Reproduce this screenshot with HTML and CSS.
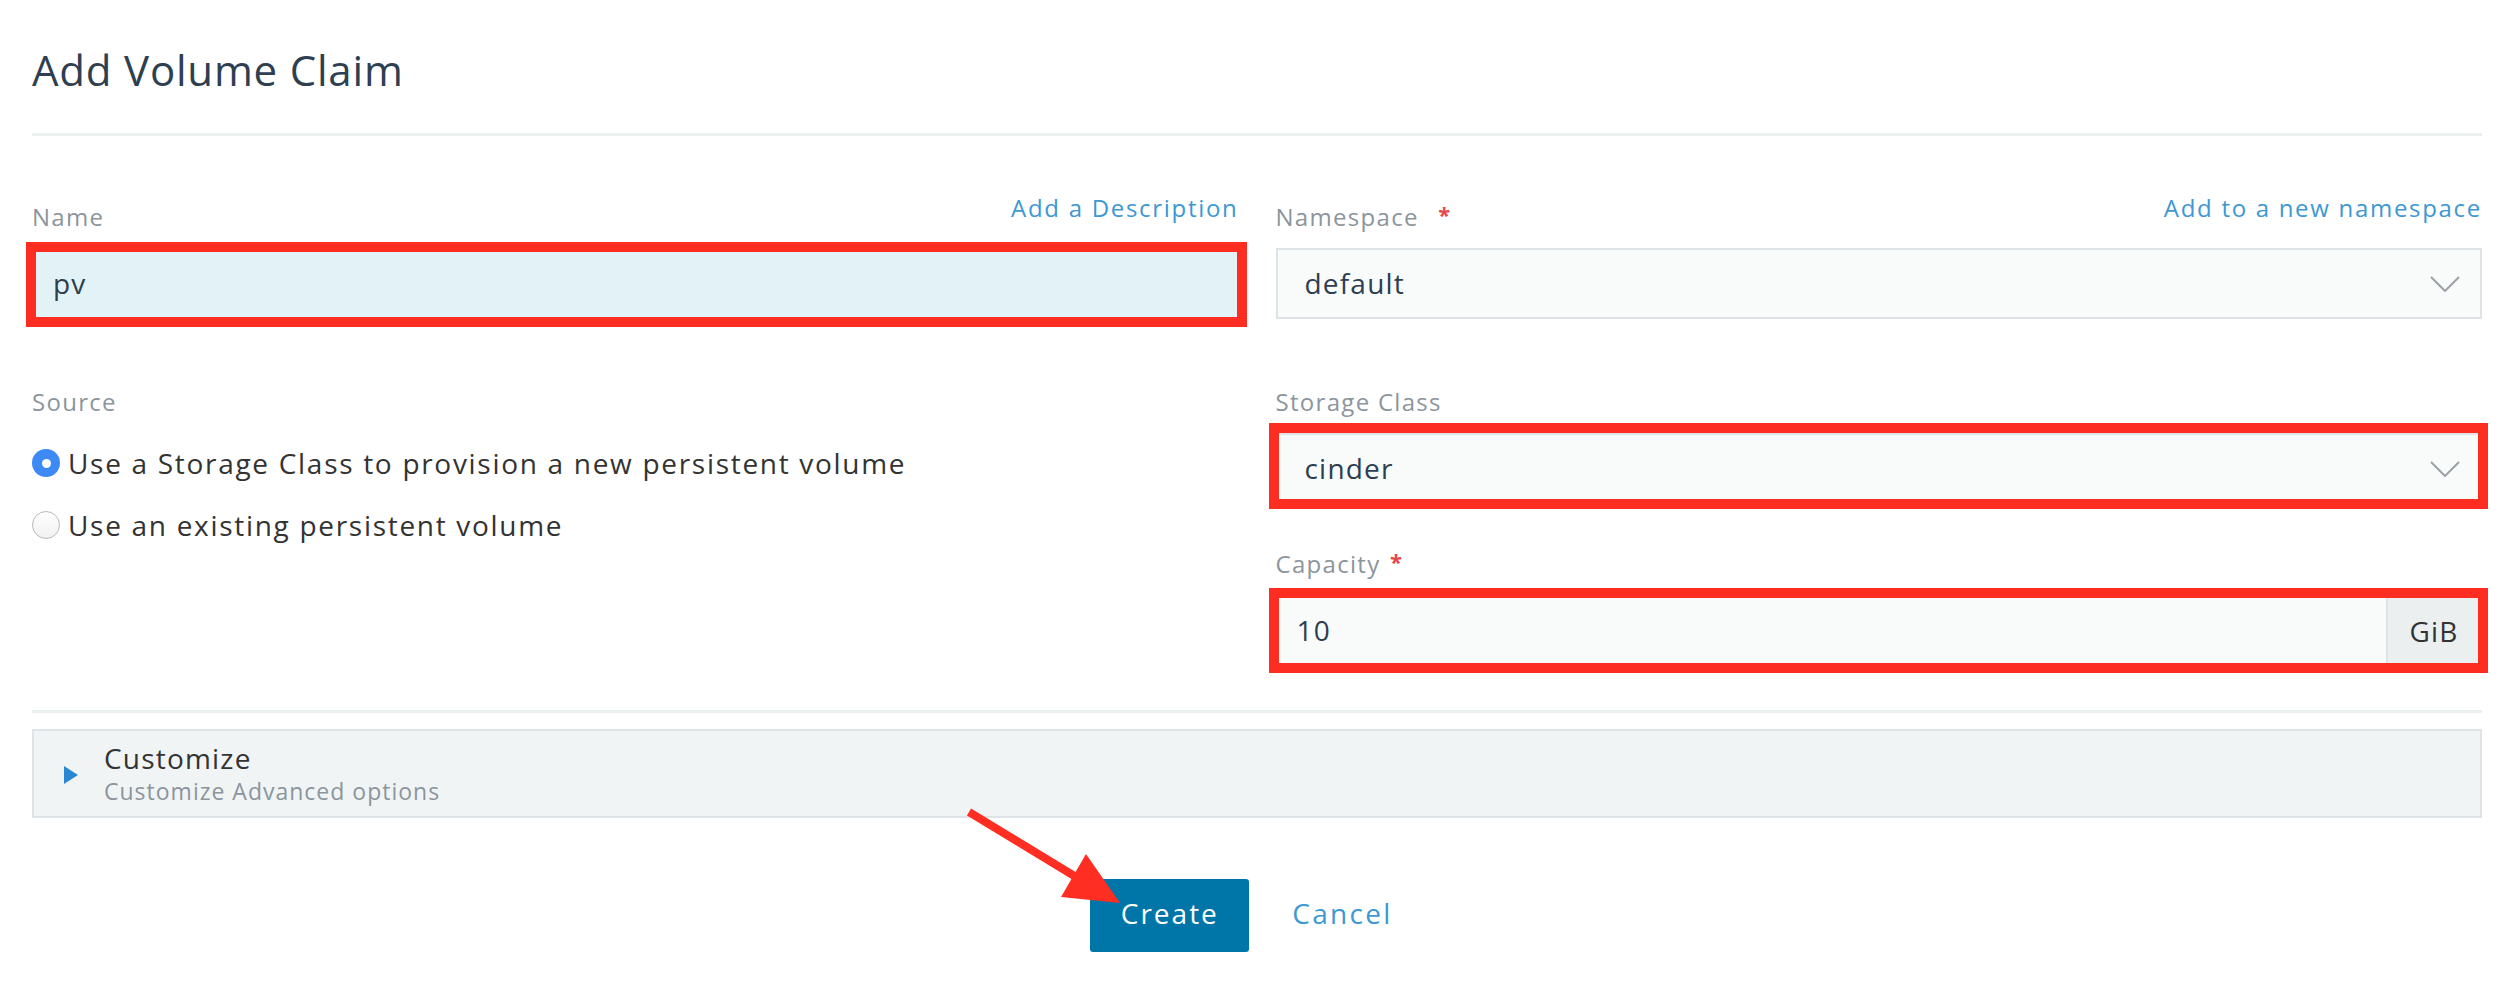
FILE: index.html
```html
<!DOCTYPE html>
<html lang="en">
<head>
    <meta charset="UTF-8">
    <title>Add Volume Claim</title>
    <link rel="stylesheet" href="styles.css">
</head>
<body>

<main class="page">
    <h1 class="page-title">Add Volume Claim</h1>
    <div class="rule"></div>

    <div class="form-grid">
        <!-- left column: name + source -->
        <div class="col">
            <div class="field">
                <div class="field-head">
                    <span class="label">Name</span>
                    <a class="link" href="#">Add a Description</a>
                </div>
                <div class="input is-focused marked mark-name">pv</div>
            </div>

            <div class="field row-2">
                <div class="field-head">
                    <span class="label">Source</span>
                </div>
                <div class="radios">
                    <label class="radio"><span class="radio-dot checked"></span>Use a Storage Class to provision a new persistent volume</label>
                    <label class="radio"><span class="radio-dot"></span>Use an existing persistent volume</label>
                </div>
            </div>
        </div>

        <!-- right column: namespace, storage class, capacity -->
        <div class="col">
            <div class="field">
                <div class="field-head">
                    <span class="label">Namespace <span class="req req-wide">*</span></span>
                    <a class="link" href="#">Add to a new namespace</a>
                </div>
                <div class="select">
                    <span>default</span>
                    <svg class="chevron" width="30" height="16" viewBox="0 0 30 16"><polyline points="1,1 15,15 29,1" fill="none" stroke="#9ba1a6" stroke-width="2"/></svg>
                </div>
            </div>

            <div class="field row-2">
                <div class="field-head">
                    <span class="label">Storage Class</span>
                </div>
                <div class="select marked mark-storage">
                    <span>cinder</span>
                    <svg class="chevron" width="30" height="16" viewBox="0 0 30 16"><polyline points="1,1 15,15 29,1" fill="none" stroke="#9ba1a6" stroke-width="2"/></svg>
                </div>
            </div>

            <div class="field row-3">
                <div class="field-head">
                    <span class="label">Capacity <span class="req">*</span></span>
                </div>
                <div class="input-group marked mark-capacity">
                    <span class="input-value">10</span>
                    <span class="addon">GiB</span>
                </div>
            </div>
        </div>
    </div>

    <div class="rule rule-bottom"></div>

    <div class="accordion">
        <span class="caret"></span>
        <div class="accordion-text">
            <div class="accordion-title">Customize</div>
            <div class="accordion-sub">Customize Advanced options</div>
        </div>
    </div>

    <div class="actions">
        <button class="btn-primary">Create</button>
        <a class="btn-link" href="#">Cancel</a>
    </div>

    <!-- red pointer over the create button -->
    <svg class="pointer" width="180" height="115" viewBox="0 0 180 115">
        <line x1="19" y1="12" x2="126" y2="77" stroke="#fe2e22" stroke-width="8"/>
        <polygon points="170,103 136,54 111,97" fill="#fe2e22"/>
    </svg>
</main>

</body>
</html>
```

FILE: styles.css
```css
body { margin: 0; background: #fff; font-family: "Open Sans", "Noto Sans", sans-serif; }

.page { position: relative; padding: 45px 38px 40px 32px; }

.page-title { margin: 0; font-size: 42px; line-height: 50px; font-weight: 400; color: #2f3f52; letter-spacing: 0.8px; }

.rule { height: 3px; background: #ebeff0; margin-top: 38px; }
.rule-bottom { margin-top: 44px; }

.form-grid { display: grid; grid-template-columns: 1fr 1fr; column-gap: 37px; margin-top: 66px; }

.field-head { display: flex; justify-content: space-between; align-items: flex-start; height: 30px; margin-bottom: 16px; }
.label { font-size: 24px; line-height: 30px; color: #8c959c; letter-spacing: 1.3px; }
.link { font-size: 24px; line-height: 12px; color: #3d98d3; text-decoration: none; letter-spacing: 1.7px; }
.req { color: #e8474a; font-size: 22px; font-weight: 700; vertical-align: top; line-height: 24px; margin-left: 2px; }
.req-wide { margin-left: 12px; }

.row-2 { margin-top: 68px; }
.row-3 { margin-top: 45px; }

.input, .select, .input-group {
    position: relative;
    box-sizing: border-box;
    height: 71px;
    border: 2px solid #dde3e6;
    background: #f9fbfb;
    display: flex;
    align-items: center;
    padding-bottom: 2px;
    font-size: 28px;
    color: #2d3e50;
    letter-spacing: 1.2px;
}
.input { padding-left: 19px; }
.input.is-focused { background: #e3f2f7; }
.select { padding-left: 27px; padding-right: 20px; justify-content: space-between; }
.select .chevron { margin-top: 2px; }

.input-group { padding-bottom: 0; }
.input-group .input-value { flex: 1; padding-left: 19px; padding-bottom: 2px; }
.input-group .addon { align-self: stretch; width: 92px; display: flex; align-items: center; justify-content: center; background: #eceff0; border-left: 2px solid #dde3e6; color: #333; }

/* red frames drawn on top of fields */
.marked::after { content: ""; position: absolute; border: 10px solid #fe2d22; pointer-events: none; }
.mark-name::after { left: -8px; right: -10px; top: -8px; bottom: -10px; }
.mark-storage::after { left: -9px; right: -8px; top: -12px; bottom: -7px; }
.mark-capacity::after { left: -9px; right: -8px; top: -9px; bottom: -9px; }

.radios { display: flex; flex-direction: column; gap: 22px; margin-top: 26px; }
.radio { display: flex; align-items: center; height: 40px; font-size: 28px; color: #333; gap: 8px; letter-spacing: 1.7px; }
.radio-dot { box-sizing: border-box; width: 28px; height: 28px; border-radius: 50%; border: 1px solid #b9b9b9; background: linear-gradient(#fff, #f1f1f1); flex: none; position: relative; }
.radio-dot.checked { border: 0; background: #3d8af7; }
.radio-dot.checked::after { content: ""; position: absolute; left: 9.5px; top: 9.5px; width: 9px; height: 9px; border-radius: 50%; background: #fff; }

.accordion { box-sizing: border-box; height: 89px; margin-top: 16px; border: 2px solid #dde3e6; background: #f0f4f5; display: flex; align-items: center; padding: 0 0 0 30px; }
.caret { width: 0; height: 0; border-left: 14px solid #2a87d1; border-top: 9.5px solid transparent; border-bottom: 9.5px solid transparent; margin-right: 26px; margin-top: 3px; }
.accordion-title { font-size: 28px; line-height: 32px; color: #333; letter-spacing: 1.2px; }
.accordion-sub { font-size: 23px; line-height: 28px; color: #8c959c; margin-top: 3px; letter-spacing: 1px; }

.actions { display: flex; justify-content: center; align-items: center; margin-top: 61px; padding-right: 31px; }
.btn-primary { width: 159px; height: 73px; border: 0; border-radius: 3px; background: #0075a8; color: #fff; font-family: inherit; font-size: 28px; padding: 0 0 5px; letter-spacing: 2px; }
.btn-link { font-size: 28px; color: #3d98d3; text-decoration: none; padding-left: 43px; padding-bottom: 5px; letter-spacing: 2.3px; }

.pointer { position: absolute; left: 950px; top: 800px; }
```
